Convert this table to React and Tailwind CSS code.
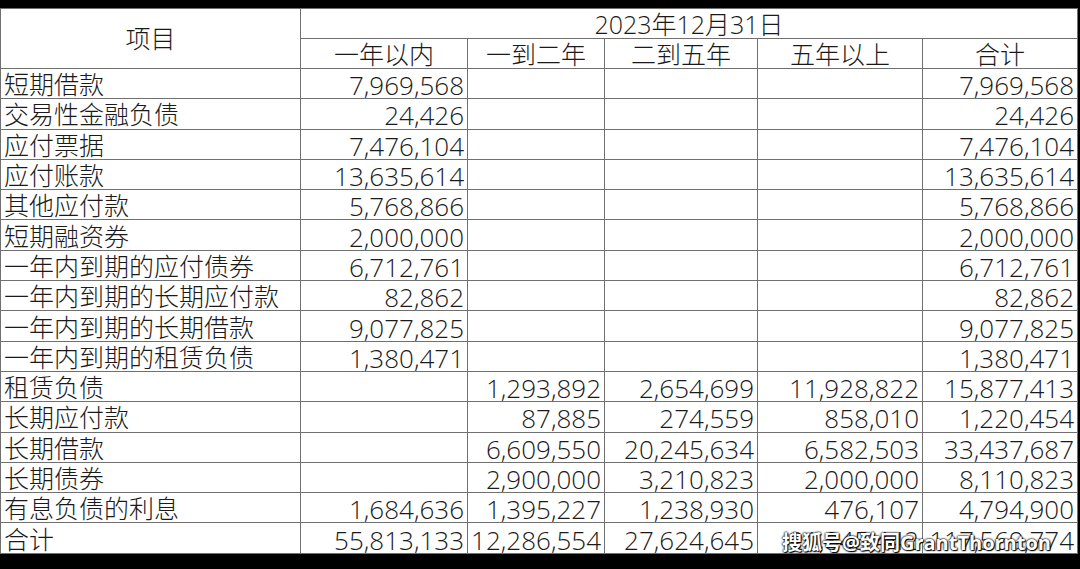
import React from "react";

const rows = [
  ["短期借款", "7,969,568", "", "", "", "7,969,568"],
  ["交易性金融负债", "24,426", "", "", "", "24,426"],
  ["应付票据", "7,476,104", "", "", "", "7,476,104"],
  ["应付账款", "13,635,614", "", "", "", "13,635,614"],
  ["其他应付款", "5,768,866", "", "", "", "5,768,866"],
  ["短期融资券", "2,000,000", "", "", "", "2,000,000"],
  ["一年内到期的应付债券", "6,712,761", "", "", "", "6,712,761"],
  ["一年内到期的长期应付款", "82,862", "", "", "", "82,862"],
  ["一年内到期的长期借款", "9,077,825", "", "", "", "9,077,825"],
  ["一年内到期的租赁负债", "1,380,471", "", "", "", "1,380,471"],
  ["租赁负债", "", "1,293,892", "2,654,699", "11,928,822", "15,877,413"],
  ["长期应付款", "", "87,885", "274,559", "858,010", "1,220,454"],
  ["长期借款", "", "6,609,550", "20,245,634", "6,582,503", "33,437,687"],
  ["长期债券", "", "2,900,000", "3,210,823", "2,000,000", "8,110,823"],
  ["有息负债的利息", "1,684,636", "1,395,227", "1,238,930", "476,107", "4,794,900"],
  ["合计", "55,813,133", "12,286,554", "27,624,645", "21,845,442", "117,569,774"],
];

const periods = ["一年以内", "一到二年", "二到五年", "五年以上", "合计"];

export default function App() {
  return (
    <div
      className="relative w-[1080px] h-[569px] bg-black pt-[8px] text-[#1a1a1a] text-[25px] leading-none font-light"
      style={{ fontFamily: '"Open Sans", "Noto Sans CJK SC", sans-serif' }}
    >
      {/* table */}
      <div className="w-[1078px] bg-[#707070] p-px grid gap-px grid-cols-[299px_166px_136px_152px_164px_154px] grid-rows-[29px_29px_repeat(16,29.3px)]">
        <div className="row-span-2 bg-white flex items-center justify-center">项目</div>
        <div className="col-span-5 bg-white flex items-center justify-center pt-[2px]">2023年12月31日</div>
        {periods.map((p) => (
          <div key={p} className="bg-white flex items-center justify-center pt-[2px]">{p}</div>
        ))}
        {rows.map((r) =>
          r.map((cell, i) => (
            <div
              key={r[0] + i}
              className={
                i === 0
                  ? "bg-white flex items-center pl-[3px] pt-[2px] whitespace-nowrap"
                  : "bg-white flex items-center justify-end pr-[3px] pt-[3px] whitespace-nowrap text-[26px]"
              }
            >
              {cell}
            </div>
          ))
        )}
      </div>

      {/* watermark */}
      <div className="absolute left-[782px] top-[533px] text-[20px] font-bold text-white whitespace-nowrap [text-shadow:0_0_2px_#000,0_0_2px_#000,1px_1px_1px_#000]">
        搜狐号@致同GrantThornton
      </div>
    </div>
  );
}
